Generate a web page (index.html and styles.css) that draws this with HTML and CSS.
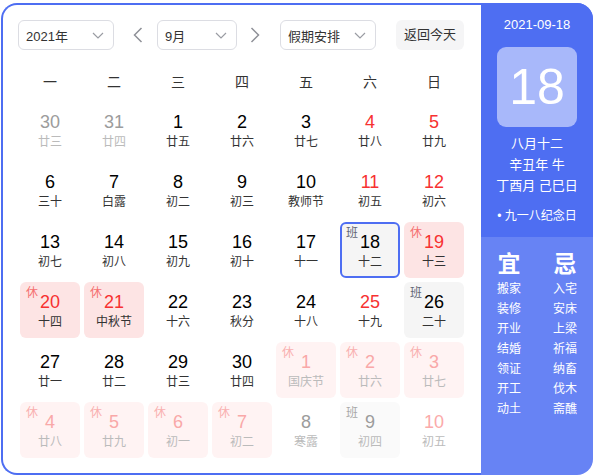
FILE: index.html
```html
<!DOCTYPE html>
<html lang="zh-CN">
<head>
<meta charset="utf-8">
<title>万年历</title>
<link rel="stylesheet" href="styles.css">
</head>
<body>
<div class="calendar">
  <div class="main">
    <div class="toolbar">
      <div class="select sel-year"><span>2021年</span><svg class="chev" width="12" height="7" viewBox="0 0 12 7"><polyline points="1,1 6,6 11,1"/></svg></div>
      <div class="arrow arrow-prev"><svg width="10" height="16" viewBox="0 0 10 16"><polyline points="8.5,1 1.5,8 8.5,15"/></svg></div>
      <div class="select sel-month"><span>9月</span><svg class="chev" width="12" height="7" viewBox="0 0 12 7"><polyline points="1,1 6,6 11,1"/></svg></div>
      <div class="arrow arrow-next"><svg width="10" height="16" viewBox="0 0 10 16"><polyline points="1.5,1 8.5,8 1.5,15"/></svg></div>
      <div class="select sel-holiday"><span>假期安排</span><svg class="chev" width="12" height="7" viewBox="0 0 12 7"><polyline points="1,1 6,6 11,1"/></svg></div>
      <div class="today-btn">返回今天</div>
    </div>
    <div class="weekdays">
      <div>一</div><div>二</div><div>三</div><div>四</div><div>五</div><div>六</div><div>日</div>
    </div>
    <div class="days">
      <div class="day other"><span class="num">30</span><span class="lunar">廿三</span></div>
      <div class="day other"><span class="num">31</span><span class="lunar">廿四</span></div>
      <div class="day"><span class="num">1</span><span class="lunar">廿五</span></div>
      <div class="day"><span class="num">2</span><span class="lunar">廿六</span></div>
      <div class="day"><span class="num">3</span><span class="lunar">廿七</span></div>
      <div class="day weekend"><span class="num">4</span><span class="lunar">廿八</span></div>
      <div class="day weekend"><span class="num">5</span><span class="lunar">廿九</span></div>

      <div class="day"><span class="num">6</span><span class="lunar">三十</span></div>
      <div class="day"><span class="num">7</span><span class="lunar">白露</span></div>
      <div class="day"><span class="num">8</span><span class="lunar">初二</span></div>
      <div class="day"><span class="num">9</span><span class="lunar">初三</span></div>
      <div class="day"><span class="num">10</span><span class="lunar">教师节</span></div>
      <div class="day weekend"><span class="num">11</span><span class="lunar">初五</span></div>
      <div class="day weekend"><span class="num">12</span><span class="lunar">初六</span></div>

      <div class="day"><span class="num">13</span><span class="lunar">初七</span></div>
      <div class="day"><span class="num">14</span><span class="lunar">初八</span></div>
      <div class="day"><span class="num">15</span><span class="lunar">初九</span></div>
      <div class="day"><span class="num">16</span><span class="lunar">初十</span></div>
      <div class="day"><span class="num">17</span><span class="lunar">十一</span></div>
      <div class="day work selected"><span class="tag">班</span><span class="num">18</span><span class="lunar">十二</span></div>
      <div class="day rest"><span class="tag">休</span><span class="num">19</span><span class="lunar">十三</span></div>

      <div class="day rest"><span class="tag">休</span><span class="num">20</span><span class="lunar">十四</span></div>
      <div class="day rest"><span class="tag">休</span><span class="num">21</span><span class="lunar">中秋节</span></div>
      <div class="day"><span class="num">22</span><span class="lunar">十六</span></div>
      <div class="day"><span class="num">23</span><span class="lunar">秋分</span></div>
      <div class="day"><span class="num">24</span><span class="lunar">十八</span></div>
      <div class="day weekend"><span class="num">25</span><span class="lunar">十九</span></div>
      <div class="day work"><span class="tag">班</span><span class="num">26</span><span class="lunar">二十</span></div>

      <div class="day"><span class="num">27</span><span class="lunar">廿一</span></div>
      <div class="day"><span class="num">28</span><span class="lunar">廿二</span></div>
      <div class="day"><span class="num">29</span><span class="lunar">廿三</span></div>
      <div class="day"><span class="num">30</span><span class="lunar">廿四</span></div>
      <div class="day other rest"><span class="tag">休</span><span class="num">1</span><span class="lunar">国庆节</span></div>
      <div class="day other rest"><span class="tag">休</span><span class="num">2</span><span class="lunar">廿六</span></div>
      <div class="day other rest"><span class="tag">休</span><span class="num">3</span><span class="lunar">廿七</span></div>

      <div class="day other rest"><span class="tag">休</span><span class="num">4</span><span class="lunar">廿八</span></div>
      <div class="day other rest"><span class="tag">休</span><span class="num">5</span><span class="lunar">廿九</span></div>
      <div class="day other rest"><span class="tag">休</span><span class="num">6</span><span class="lunar">初一</span></div>
      <div class="day other rest"><span class="tag">休</span><span class="num">7</span><span class="lunar">初二</span></div>
      <div class="day other"><span class="num">8</span><span class="lunar">寒露</span></div>
      <div class="day other work"><span class="tag">班</span><span class="num">9</span><span class="lunar">初四</span></div>
      <div class="day other weekend"><span class="num">10</span><span class="lunar">初五</span></div>
    </div>
  </div>
  <div class="side">
    <div class="side-top">
      <div class="side-date">2021-09-18</div>
      <div class="big-day">18</div>
      <div class="lunar-info">
        <div>八月十二</div>
        <div>辛丑年 牛</div>
        <div>丁酉月 己巳日</div>
      </div>
      <div class="festival">• 九一八纪念日</div>
    </div>
    <div class="side-bottom">
      <div class="yiji">
        <div class="yiji-title">宜</div>
        <div class="yiji-item">搬家</div>
        <div class="yiji-item">装修</div>
        <div class="yiji-item">开业</div>
        <div class="yiji-item">结婚</div>
        <div class="yiji-item">领证</div>
        <div class="yiji-item">开工</div>
        <div class="yiji-item">动土</div>
      </div>
      <div class="yiji">
        <div class="yiji-title">忌</div>
        <div class="yiji-item">入宅</div>
        <div class="yiji-item">安床</div>
        <div class="yiji-item">上梁</div>
        <div class="yiji-item">祈福</div>
        <div class="yiji-item">纳畜</div>
        <div class="yiji-item">伐木</div>
        <div class="yiji-item">斋醮</div>
      </div>
    </div>
  </div>
</div>
</body>
</html>
```

FILE: styles.css
```css
* { box-sizing: border-box; }

html, body {
  margin: 0;
  padding: 0;
  background: #fff;
}

body {
  font-family: "Liberation Sans", Arial, "Noto Sans CJK SC", sans-serif;
  color: #333;
}

.calendar {
  display: flex;
  width: 592px;
  height: 472px;
  margin: 3px 0 0 1px;
}

.main {
  width: 480px;
  height: 472px;
  border: 2px solid #4e6ef2;
  border-right: none;
  border-radius: 16px 0 0 16px;
  padding: 15px 15px 0 15px;
}

.toolbar {
  display: flex;
  align-items: center;
  height: 30px;
}

.select {
  display: flex;
  align-items: center;
  justify-content: space-between;
  height: 30px;
  border: 1px solid #dcdde3;
  border-radius: 6px;
  padding: 0 9px 0 7px;
  font-size: 13px;
  color: #333;
}

.sel-year { width: 96px; }
.sel-month { width: 80px; }
.sel-holiday { width: 96px; }

.chev polyline {
  fill: none;
  stroke: #9a9ca3;
  stroke-width: 1.2;
}

.arrow {
  display: flex;
  align-items: center;
  justify-content: center;
  width: 16px;
  height: 30px;
}

.arrow polyline {
  fill: none;
  stroke: #8e9097;
  stroke-width: 1.5;
}

.arrow-prev { margin: 0 11px 0 16px; }
.arrow-next { margin: 0 17px 0 10px; }

.today-btn {
  margin-left: 20px;
  width: 68px;
  height: 30px;
  line-height: 30px;
  text-align: center;
  background: #f5f5f6;
  border-radius: 6px;
  font-size: 13px;
  color: #333;
}

.weekdays {
  display: grid;
  grid-template-columns: repeat(7, 60px);
  column-gap: 4px;
  margin: 16px 2px 0 2px;
  height: 32px;
  line-height: 32px;
  font-size: 14px;
  text-align: center;
  color: #333;
}

.days {
  display: grid;
  grid-template-columns: repeat(7, 60px);
  grid-auto-rows: 56px;
  gap: 4px;
  margin: 4px 2px 0 2px;
}

.day {
  position: relative;
  display: flex;
  flex-direction: column;
  align-items: center;
  padding-top: 9px;
  border-radius: 6px;
}

.num {
  font-size: 18px;
  line-height: 22px;
  color: #000;
}

.lunar {
  font-size: 12px;
  line-height: 18px;
  color: #333;
}

.tag {
  position: absolute;
  top: 4px;
  left: 6px;
  font-size: 12px;
  line-height: 14px;
}

.weekend .num { color: #f73131; }

.rest { background: #fde4e4; }
.rest .num { color: #f73131; }
.rest .tag { color: #f57070; }

.work { background: #f5f5f5; }
.work .tag { color: #626675; }

.selected {
  border: 2px solid #4e6ef2;
  padding-top: 7px;
}
.selected .tag { top: 2px; left: 4px; }

.other .num { color: #9c9c9c; }
.other .lunar { color: #bbbbbb; }
.other.weekend .num { color: #fbaaaa; }
.other.rest { background: #fff3f3; }
.other.rest .num { color: #f9a8a8; }
.other.rest .tag { color: #f9b0b0; }
.other.work { background: #fafafa; }
.other.work .tag { color: #a8a8a8; }
.other.work .num { color: #9c9c9c; }

.side {
  width: 112px;
  height: 472px;
  border-radius: 0 16px 16px 0;
  overflow: hidden;
  background: #6783f4;
  color: #fff;
  display: flex;
  flex-direction: column;
}

.side-top {
  background: #4e6ef2;
  padding: 12px 0 11px 0;
  text-align: center;
}

.side-date {
  font-size: 13px;
  line-height: 20px;
}

.big-day {
  margin: 12px auto 0 auto;
  width: 80px;
  height: 80px;
  line-height: 80px;
  border-radius: 9px;
  background: #a8b8fa;
  font-size: 50px;
  text-align: center;
}

.lunar-info {
  margin-top: 6px;
  font-size: 13px;
  line-height: 21px;
  white-space: nowrap;
}

.festival {
  margin-top: 10px;
  font-size: 12px;
  line-height: 20px;
  white-space: nowrap;
}

.side-bottom {
  display: flex;
  justify-content: space-between;
  padding: 13px 16px 0 16px;
}

.yiji {
  display: flex;
  flex-direction: column;
  align-items: center;
}

.yiji-title {
  font-size: 23px;
  font-weight: bold;
  line-height: 28px;
  margin-bottom: 1px;
}

.yiji-item {
  font-size: 12px;
  line-height: 20px;
}
```
